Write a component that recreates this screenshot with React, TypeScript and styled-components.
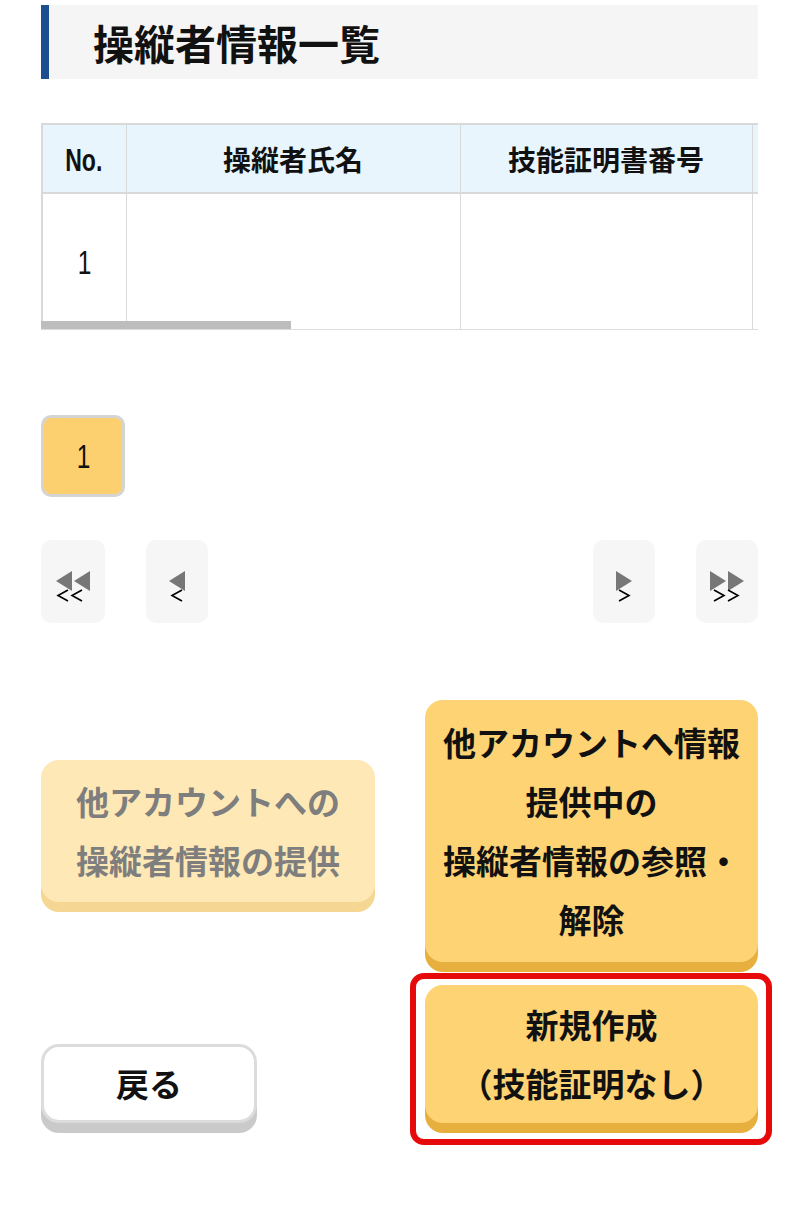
import React from 'react';
import styled, { createGlobalStyle } from 'styled-components';

const GlobalStyle = createGlobalStyle`
  html, body { margin: 0; padding: 0; background: #ffffff; }
  body {
    font-family: "Noto Sans CJK JP", "Noto Sans", sans-serif;
    color: #111111;
  }
  * { box-sizing: border-box; }
`;

const Page = styled.div`
  width: 800px;
  padding: 5px 42px 80px 41px;
`;

const TitleBar = styled.h1`
  margin: 0;
  height: 74px;
  display: flex;
  align-items: center;
  background: #f5f5f5;
  border-left: 8px solid #1d4e8f;
  padding-left: 44px;
  font-size: 41px;
  font-weight: 700;
  line-height: 1;
  color: #111111;
`;

const TableScroller = styled.div`
  position: relative;
  margin-top: 44px;
  overflow: hidden;
  border-bottom: 1px solid #dcdcdc;
`;

const Table = styled.table`
  border-collapse: collapse;
  table-layout: fixed;
  width: 1300px;
  border-top: 2px solid #d9d9d9;
  border-left: 2px solid #d9d9d9;
`;

const HeadCell = styled.th`
  height: 69px;
  padding: 0;
  background: #e8f5fd;
  border: 1px solid #d9d9d9;
  border-bottom-width: 2px;
  font-size: 28px;
  font-weight: 700;
  text-align: center;
  vertical-align: middle;
  color: #111111;
`;

const Condensed = styled.span<{ $size: number; $bold?: boolean }>`
  display: inline-block;
  font-family: "Liberation Sans", "Noto Sans", sans-serif;
  font-size: ${(p) => p.$size}px;
  font-weight: ${(p) => (p.$bold ? 700 : 400)};
  line-height: 1;
  transform: scaleX(0.72);
`;

const BodyCell = styled.td`
  height: 136px;
  padding: 0;
  border: 1px solid #d9d9d9;
  border-bottom: none;
  text-align: center;
  vertical-align: middle;
  color: #111111;
`;

const ScrollThumb = styled.div`
  position: absolute;
  left: 0;
  bottom: 0;
  width: 250px;
  height: 8px;
  background: #bdbdbd;
`;

const PageButton = styled.div`
  margin-top: 85px;
  width: 84px;
  height: 82px;
  display: flex;
  align-items: center;
  justify-content: center;
  background: #fdd06f;
  border: 3px solid #d4d4d4;
  border-radius: 10px;
  color: #111111;
`;

const NavRow = styled.div`
  margin-top: 43px;
  display: flex;
  justify-content: space-between;
`;

const NavGroup = styled.div`
  display: flex;
  gap: 41px;
`;

const NavButton = styled.div<{ $wide?: boolean }>`
  width: ${(p) => (p.$wide ? 64 : 62)}px;
  height: 83px;
  display: flex;
  align-items: center;
  justify-content: center;
  padding-top: 11px;
  background: #f6f6f6;
  border-radius: 10px;
`;

const ActionGrid = styled.div`
  margin-top: 77px;
  display: grid;
  grid-template-columns: 334px 333px;
  column-gap: 50px;
  row-gap: 23px;
  align-items: center;
`;

type Variant = 'primary' | 'disabled' | 'plain';

const ActionButton = styled.button<{ $variant: Variant; $padY: number }>`
  display: block;
  width: 100%;
  margin: 0;
  padding: ${(p) => p.$padY}px 0;
  border: none;
  border-radius: 18px;
  font-family: "Noto Sans CJK JP", "Noto Sans", sans-serif;
  font-size: 33px;
  font-weight: 700;
  line-height: 59px;
  text-align: center;
  white-space: nowrap;
  cursor: pointer;
  background: ${(p) =>
    p.$variant === 'primary' ? '#fdd374' : p.$variant === 'disabled' ? '#fee8b5' : '#ffffff'};
  color: ${(p) => (p.$variant === 'disabled' ? '#7e7e7e' : '#111111')};
  box-shadow: 0 10px 0
    ${(p) =>
      p.$variant === 'primary' ? '#e7af3d' : p.$variant === 'disabled' ? '#f5d793' : '#cacaca'};
`;

const BackButton = styled(ActionButton)`
  width: 216px;
  height: 79px;
  padding: 0;
  border: 3px solid #dcdcdc;
  align-self: end;
  line-height: 1;
`;

const Highlight = styled.div`
  position: relative;
  &::after {
    content: '';
    position: absolute;
    top: -12px;
    left: -15px;
    right: -14px;
    bottom: -22px;
    border: 6px solid #e60a0a;
    border-radius: 14px;
    pointer-events: none;
  }
`;

const TRI = '#777777';

const FirstIcon = () => (
  <svg width="36" height="32" viewBox="0 0 36 32">
    <polygon points="1,10 17,0 17,20" fill={TRI} />
    <polygon points="19,10 35,0 35,20" fill={TRI} />
    <polyline points="13,19 3,24.5 13,30" fill="none" stroke="#000" strokeWidth="1.6" />
    <polyline points="27,19 17,24.5 27,30" fill="none" stroke="#000" strokeWidth="1.6" />
  </svg>
);

const PrevIcon = () => (
  <svg width="18" height="32" viewBox="0 0 18 32">
    <polygon points="1,10 17,0 17,20" fill={TRI} />
    <polyline points="14,19 4,24.5 14,30" fill="none" stroke="#000" strokeWidth="1.6" />
  </svg>
);

const NextIcon = () => (
  <svg width="18" height="32" viewBox="0 0 18 32">
    <polygon points="1,0 17,10 1,20" fill={TRI} />
    <polyline points="4,19 14,24.5 4,30" fill="none" stroke="#000" strokeWidth="1.6" />
  </svg>
);

const LastIcon = () => (
  <svg width="36" height="32" viewBox="0 0 36 32">
    <polygon points="1,0 17,10 1,20" fill={TRI} />
    <polygon points="19,0 35,10 19,20" fill={TRI} />
    <polyline points="5,19 15,24.5 5,30" fill="none" stroke="#000" strokeWidth="1.6" />
    <polyline points="19,19 29,24.5 19,30" fill="none" stroke="#000" strokeWidth="1.6" />
  </svg>
);

export default function App() {
  return (
    <>
      <GlobalStyle />
      <Page>
        <TitleBar>操縦者情報一覧</TitleBar>

        <TableScroller>
          <Table>
            <colgroup>
              <col style={{ width: 84 }} />
              <col style={{ width: 334 }} />
              <col style={{ width: 292 }} />
              <col style={{ width: 300 }} />
              <col style={{ width: 290 }} />
            </colgroup>
            <thead>
              <tr>
                <HeadCell>
                  <Condensed $size={32} $bold>
                    No.
                  </Condensed>
                </HeadCell>
                <HeadCell>操縦者氏名</HeadCell>
                <HeadCell>技能証明書番号</HeadCell>
                <HeadCell />
                <HeadCell />
              </tr>
            </thead>
            <tbody>
              <tr>
                <BodyCell>
                  <Condensed $size={34}>1</Condensed>
                </BodyCell>
                <BodyCell />
                <BodyCell />
                <BodyCell />
                <BodyCell />
              </tr>
            </tbody>
          </Table>
          <ScrollThumb />
        </TableScroller>

        <PageButton>
          <Condensed $size={34}>1</Condensed>
        </PageButton>

        <NavRow>
          <NavGroup>
            <NavButton $wide>
              <FirstIcon />
            </NavButton>
            <NavButton>
              <PrevIcon />
            </NavButton>
          </NavGroup>
          <NavGroup>
            <NavButton>
              <NextIcon />
            </NavButton>
            <NavButton>
              <LastIcon />
            </NavButton>
          </NavGroup>
        </NavRow>

        <ActionGrid>
          <ActionButton $variant="disabled" $padY={12} disabled>
            他アカウントへの
            <br />
            操縦者情報の提供
          </ActionButton>
          <ActionButton $variant="primary" $padY={13}>
            他アカウントへ情報
            <br />
            提供中の
            <br />
            操縦者情報の参照・
            <br />
            解除
          </ActionButton>
          <BackButton $variant="plain" $padY={0}>
            戻る
          </BackButton>
          <Highlight>
            <ActionButton $variant="primary" $padY={10}>
              新規作成
              <br />
              （技能証明なし）
            </ActionButton>
          </Highlight>
        </ActionGrid>
      </Page>
    </>
  );
}
